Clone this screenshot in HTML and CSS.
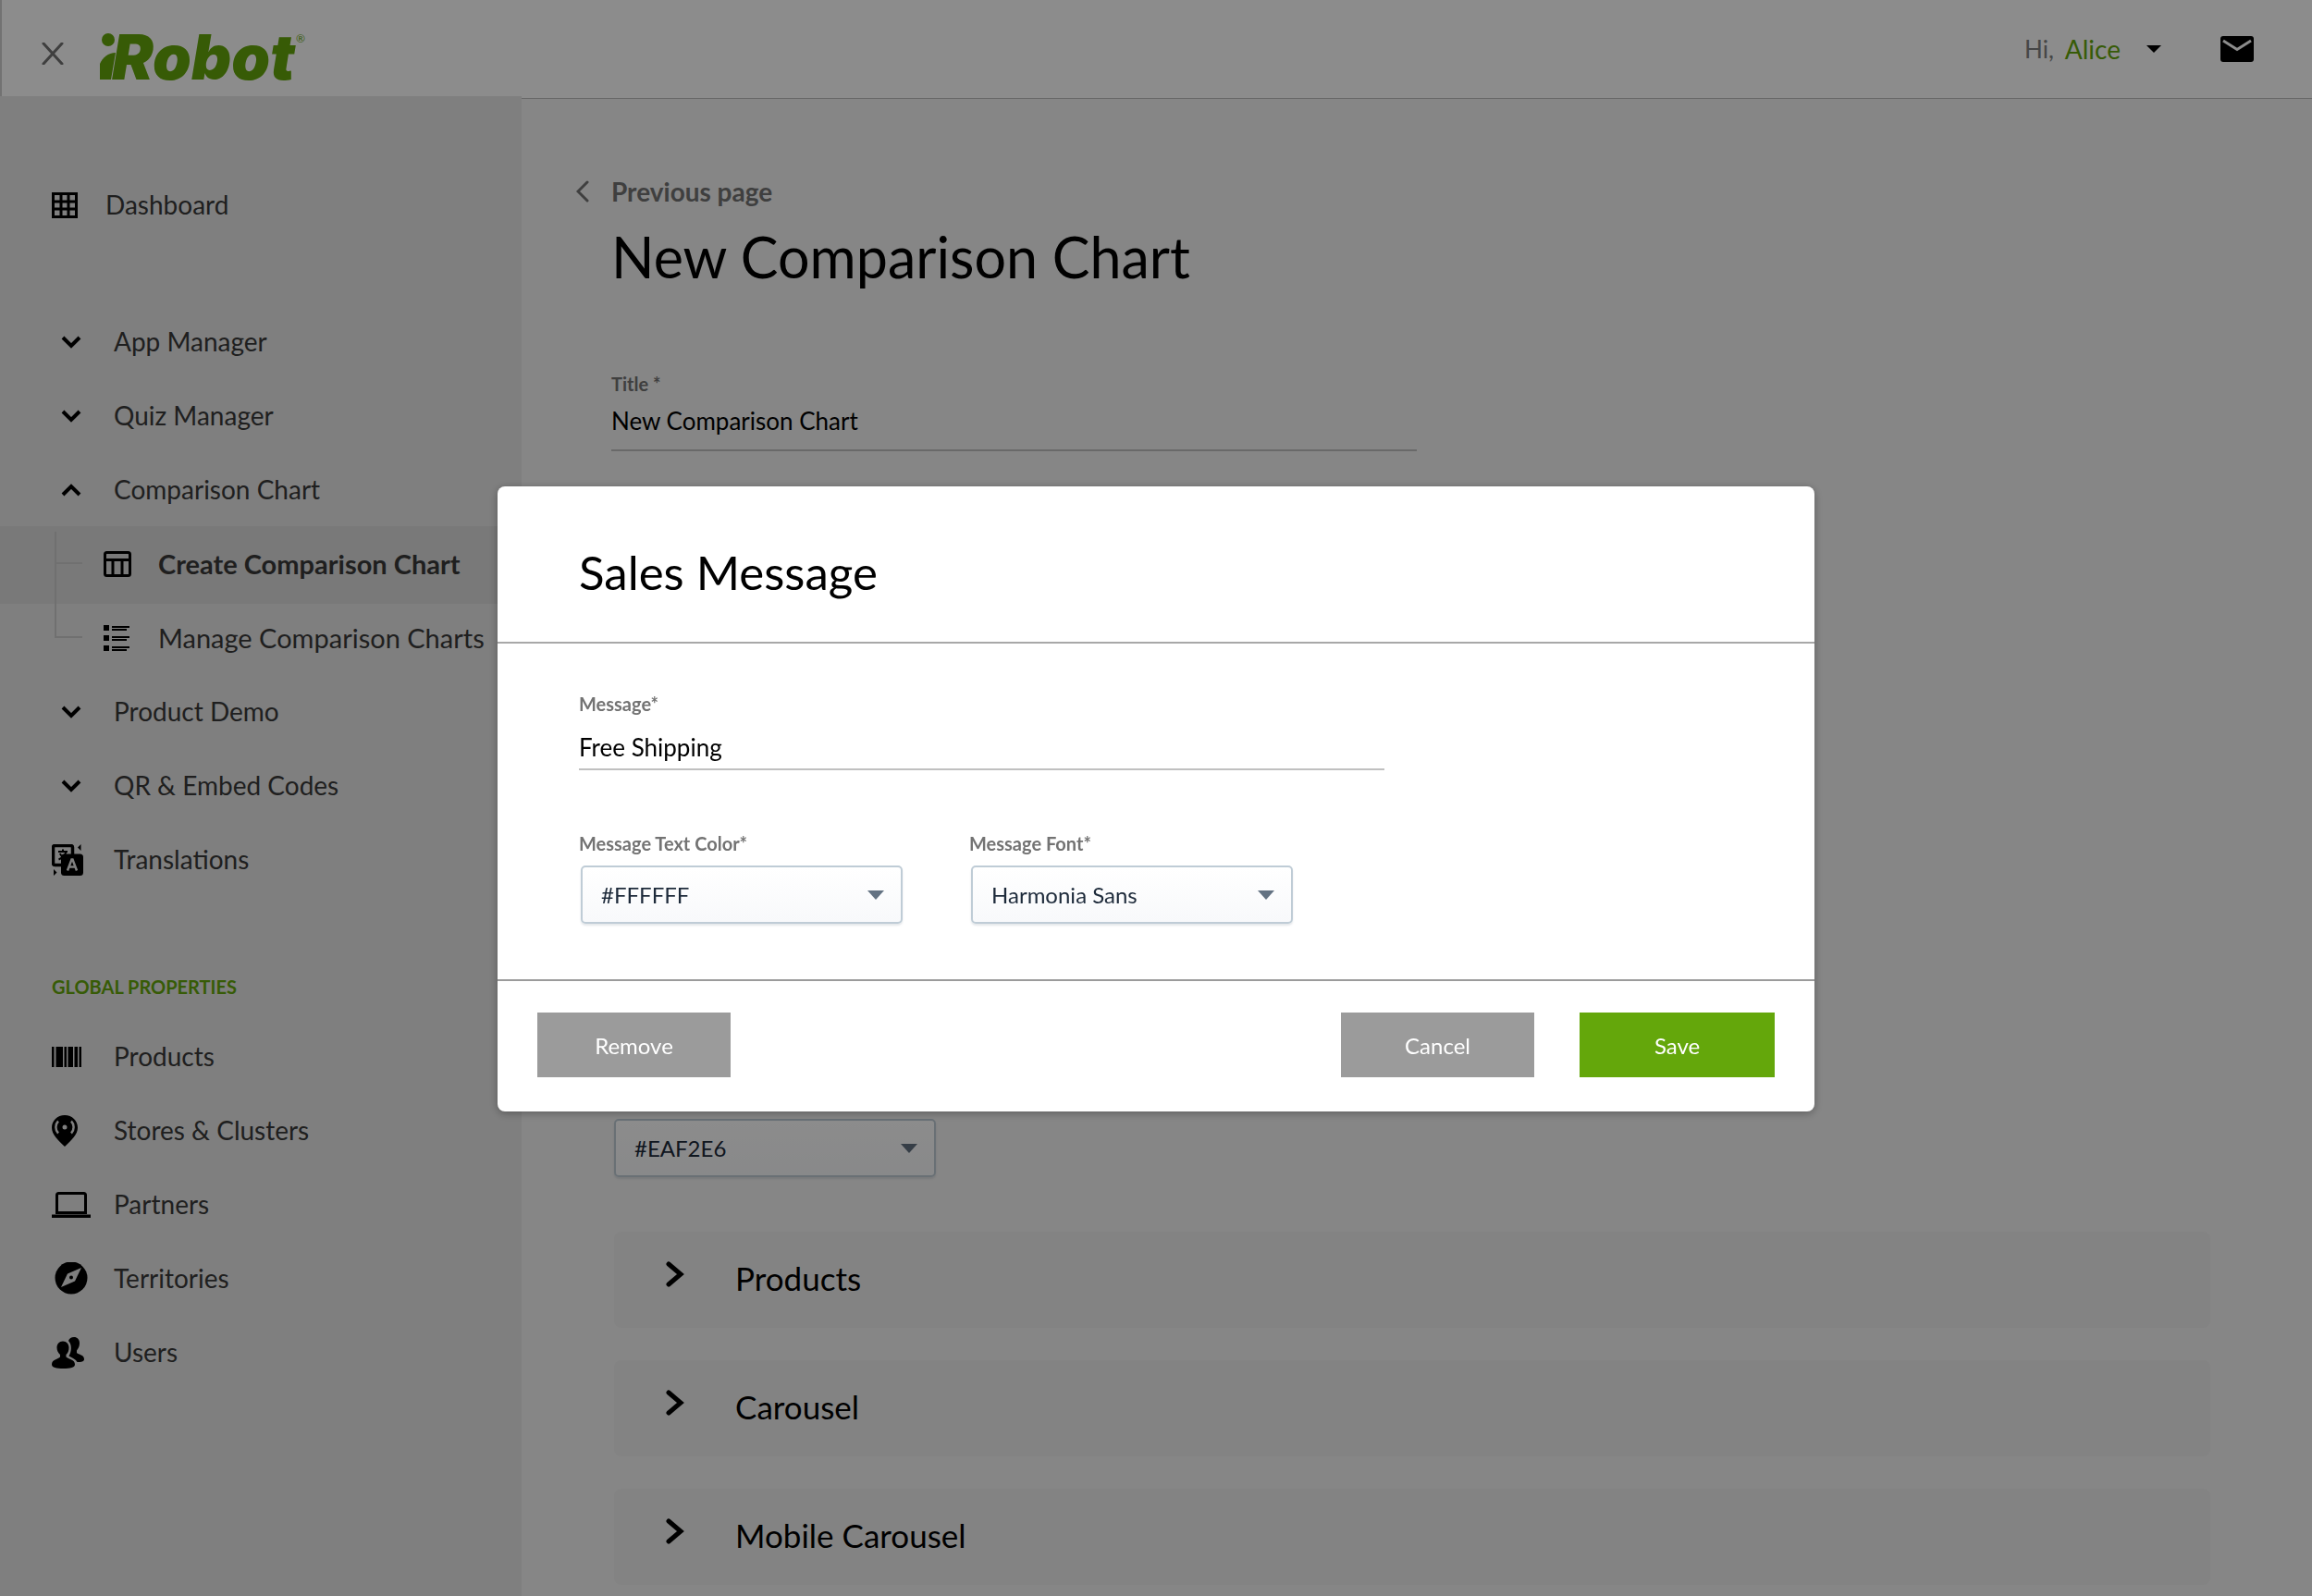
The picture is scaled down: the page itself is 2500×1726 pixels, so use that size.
FILE: index.html
```html
<!DOCTYPE html>
<html lang="en">
<head>
<meta charset="utf-8">
<meta name="viewport" content="width=device-width, initial-scale=1">
<title>New Comparison Chart</title>
<link rel="stylesheet" href="styles.css">
</head>
<body>
<header class="topbar">
  <button class="icon-button" type="button" aria-label="Close menu">
    <svg width="24" height="24" viewBox="0 0 24 24" fill="none" stroke="#737373" stroke-width="3" stroke-linecap="round"><path d="M2 1L22 23M22 1L2 23"/></svg>
  </button>
  <a class="logo" href="#" aria-label="iRobot">
    <svg width="222" height="54" viewBox="0 0 222 54" fill="#64a70b">
      <circle cx="9" cy="8" r="7"/>
      <path d="M0 51V34C3 27 9 22 17 22L12 51Z"/>
      <text class="logo-word" x="13" y="51">Robot</text>
      <text class="logo-mark" x="212" y="11">®</text>
    </svg>
  </a>
  <div class="account">
    <span class="greeting">Hi,</span>
    <button class="account-menu" type="button">Alice
      <svg width="16" height="8" viewBox="0 0 16 8"><path d="M0 0H16L8 8Z"/></svg>
    </button>
    <button class="icon-button" type="button" aria-label="Messages">
      <svg width="36" height="28" viewBox="0 0 36 28"><rect width="36" height="28" rx="3"/><path d="M3 5L18 14.500L33 5" fill="none" stroke="#fff" stroke-width="3"/></svg>
    </button>
  </div>
</header>

<div class="layout">
  <nav class="sidebar" aria-label="Main">
    <a class="nav-item nav-home" href="#">
      <span class="nav-icon"><svg width="28" height="28" viewBox="0 0 28 28" fill="none" stroke="#000" stroke-width="3"><path d="M1.500 1.500H26.500V26.500H1.500ZM10 1V27M18 1V27M1 10H27M1 18H27"/></svg></span>Dashboard</a>
    <button class="nav-item" type="button"><span class="nav-icon nav-chevron"><svg width="22" height="14" viewBox="0 0 22 14"><path class="chev" d="M2 2L11 11L20 2"/></svg></span>App Manager</button>
    <button class="nav-item" type="button"><span class="nav-icon nav-chevron"><svg width="22" height="14" viewBox="0 0 22 14"><path class="chev" d="M2 2L11 11L20 2"/></svg></span>Quiz Manager</button>
    <button class="nav-item" type="button" aria-expanded="true"><span class="nav-icon nav-chevron"><svg width="22" height="14" viewBox="0 0 22 14"><path class="chev" d="M2 12L11 3L20 12"/></svg></span>Comparison Chart</button>
    <div class="subnav">
      <svg class="tree" width="30" height="116" viewBox="0 0 30 116" fill="none" stroke="#cdcdcd" stroke-width="2"><path d="M1 0V114H30M1 34H30"/></svg>
      <a class="nav-item nav-sub active" href="#" aria-current="page">
        <span class="nav-icon"><svg width="30" height="28" viewBox="0 0 30 28" fill="none" stroke="#000" stroke-width="3"><rect x="1.500" y="1.500" width="27" height="25" rx="2"/><path d="M1 9.500H29M10 9V27M20 9V27"/></svg></span>Create Comparison Chart</a>
      <a class="nav-item nav-sub" href="#">
        <span class="nav-icon"><svg width="30" height="28" viewBox="0 0 30 28"><path d="M0 0H6V6H0ZM0 11H6V17H0ZM0 22H6V28H0ZM9 1H28V3H9ZM9 4H25V6H9ZM9 12H28V14H9ZM9 15H25V17H9ZM9 23H28V25H9ZM9 26H25V28H9Z"/></svg></span>Manage Comparison Charts</a>
    </div>
    <button class="nav-item" type="button"><span class="nav-icon nav-chevron"><svg width="22" height="14" viewBox="0 0 22 14"><path class="chev" d="M2 2L11 11L20 2"/></svg></span>Product Demo</button>
    <button class="nav-item" type="button"><span class="nav-icon nav-chevron"><svg width="22" height="14" viewBox="0 0 22 14"><path class="chev" d="M2 2L11 11L20 2"/></svg></span>QR &amp; Embed Codes</button>
    <a class="nav-item" href="#">
      <span class="nav-icon"><svg width="34" height="34" viewBox="0 0 34 34">
        <rect x="1.500" y="1.500" width="21" height="21" rx="2" fill="none" stroke="#000" stroke-width="3.500"/>
        <path d="M7 8H17M12 5.500V8M15.500 8C14.500 12 11 15 7.500 16.500M9 10C10 13 12.500 15 15 16" fill="none" stroke="#000" stroke-width="2"/>
        <rect x="10" y="10.500" width="24" height="23.500" rx="3.500"/>
        <path d="M17 28.500L21.500 16.500H22.500L27 28.500M19 24.500H25" fill="none" stroke="#e7e7e7" stroke-width="2.500"/>
        <path d="M31.500 0V7L28 3.500ZM2 27V34L5.500 30.500Z"/></svg></span>Translations</a>

    <h2 class="nav-heading">Global Properties</h2>
    <a class="nav-item" href="#">
      <span class="nav-icon"><svg width="32" height="22" viewBox="0 0 32 22"><path d="M0 0H2.500V22H0ZM4.500 0H12V22H4.500ZM13.500 0H16V22H13.500ZM17.500 0H23V22H17.500ZM24.500 0H28V22H24.500ZM29.500 0H32V22H29.500Z"/></svg></span>Products</a>
    <a class="nav-item" href="#">
      <span class="nav-icon"><svg width="28" height="34" viewBox="0 0 28 34"><path d="M14 0C6 0 0 6 0 13.500C0 21 7 27 14 34C21 27 28 21 28 13.500C28 6 22 0 14 0Z"/><circle cx="14" cy="13" r="2.500" fill="#e7e7e7"/><path d="M7 6.500C3.500 10 3.500 16 7 19.500M21 6.500C24.500 10 24.500 16 21 19.500" fill="none" stroke="#e7e7e7" stroke-width="2.500"/></svg></span>Stores &amp; Clusters</a>
    <a class="nav-item" href="#">
      <span class="nav-icon"><svg width="42" height="28" viewBox="0 0 42 28"><rect x="5.500" y="1.500" width="31" height="21" rx="2" fill="none" stroke="#000" stroke-width="3"/><path d="M0 24.500H42V28H0ZM4 21H38V24H4Z"/></svg></span>Partners</a>
    <a class="nav-item" href="#">
      <span class="nav-icon"><svg width="40" height="36" viewBox="0 0 40 36"><circle cx="21" cy="17" r="17.500"/><path d="M32 6L25 20.500L10 27L17 12.500Z" fill="#e7e7e7"/><circle cx="21" cy="16.500" r="2"/></svg></span>Territories</a>
    <a class="nav-item" href="#">
      <span class="nav-icon"><svg width="35" height="34" viewBox="0 0 35 34"><path d="M12 4.500C16 4.500 18.500 7.500 18.500 11.500C18.500 14.500 17.500 17 15.500 19V21.500C18 24 25 24 25 29.500C25 33 20 34 12.500 34C5 34 0 33 0 29.500C0 24 7 24 9 21.500V19C7 17 5.500 14.500 5.500 11.500C5.500 7.500 8 4.500 12 4.500Z"/><path d="M18 4C19 1.500 21 0 24 0C27.500 0 30 2.500 30 6.500C30 9.500 29 12 27 14.500V17C29 19 35 19 35 24C35 26.500 32 27 27.500 27C26 24 22.500 22.500 18.500 20.500C21.500 15.500 22 8 18 4Z"/></svg></span>Users</a>
  </nav>

  <main class="content">
    <a class="back" href="#">
      <svg width="14" height="24" viewBox="0 0 14 24" fill="none" stroke="#737373" stroke-width="3" stroke-linecap="round"><path d="M12 2L2 12L12 22"/></svg>Previous page</a>
    <h1>New Comparison Chart</h1>
    <div class="field">
      <label for="title">Title *</label>
      <input id="title" type="text" value="New Comparison Chart">
    </div>
    <div class="select background-color">
      <select aria-label="Background color"><option>#EAF2E6</option></select>
      <svg width="18" height="10" viewBox="0 0 18 10"><path d="M0 0H18L9 10Z"/></svg>
    </div>
    <div class="sections">
      <button class="section" type="button"><svg width="20" height="28" viewBox="0 0 20 28"><path d="M3 3L16 14L3 25"/></svg>Products</button>
      <button class="section" type="button"><svg width="20" height="28" viewBox="0 0 20 28"><path d="M3 3L16 14L3 25"/></svg>Carousel</button>
      <button class="section" type="button"><svg width="20" height="28" viewBox="0 0 20 28"><path d="M3 3L16 14L3 25"/></svg>Mobile Carousel</button>
    </div>
  </main>
</div>

<div class="overlay">
  <form class="modal" role="dialog" aria-modal="true" aria-labelledby="modal-title">
    <h2 class="modal-title" id="modal-title">Sales Message</h2>
    <div class="modal-body">
      <div class="field">
        <label for="message">Message*</label>
        <input id="message" type="text" value="Free Shipping">
      </div>
      <div class="field-row">
        <div class="field">
          <label for="color">Message Text Color*</label>
          <div class="select">
            <select id="color"><option>#FFFFFF</option></select>
            <svg width="18" height="10" viewBox="0 0 18 10"><path d="M0 0H18L9 10Z"/></svg>
          </div>
        </div>
        <div class="field">
          <label for="font">Message Font*</label>
          <div class="select">
            <select id="font"><option>Harmonia Sans</option></select>
            <svg width="18" height="10" viewBox="0 0 18 10"><path d="M0 0H18L9 10Z"/></svg>
          </div>
        </div>
      </div>
    </div>
    <div class="modal-actions">
      <button class="button" type="button">Remove</button>
      <button class="button push" type="button">Cancel</button>
      <button class="button primary" type="submit">Save</button>
    </div>
  </form>
</div>
</body>
</html>
```

FILE: styles.css
```css
* {
  box-sizing: border-box;
}

body {
  margin: 0;
  background: #f4f4f4;
  color: #000;
  font-family: Lato, "Open Sans", sans-serif;
  font-size: 24px;
}

button,
input,
select {
  font: inherit;
  color: inherit;
}

button {
  padding: 0;
  border: 0;
  background: none;
  text-align: left;
}

a {
  color: inherit;
  text-decoration: none;
}

h1,
h2 {
  margin: 0;
  font-weight: 400;
}

svg {
  display: block;
  flex: none;
}

/* Top bar */

.topbar {
  display: flex;
  align-items: center;
  height: 107px;
  padding: 0 63px 0 43px;
  border-bottom: 1px solid #bdbdbd;
  border-left: 2px solid #d0d0d0;
  background: #fff;
}

.topbar > .icon-button {
  margin-top: 10px;
}

.logo {
  margin: 18px 0 0 39px;
}

.logo svg {
  overflow: visible;
}

.logo-word {
  font-family: Inter, sans-serif;
  font-size: 67px;
  font-weight: 900;
  font-style: italic;
}

.logo-mark {
  font-size: 12px;
}

.account {
  display: flex;
  align-items: center;
  margin-left: auto;
  font-size: 28px;
}

.greeting {
  margin-right: 12px;
  color: #808080;
  font-size: 26px;
}

.account-menu {
  display: flex;
  align-items: center;
  gap: 28px;
  margin-right: 64px;
  color: #64a70b;
}

/* Sidebar */

.layout {
  display: flex;
  min-height: calc(100vh - 107px);
}

.sidebar {
  flex: none;
  width: 564px;
  margin-top: -3px;
  padding-top: 77px;
  background: #e7e7e7;
}

.nav-item {
  display: grid;
  grid-template-columns: 67px 1fr;
  align-items: center;
  width: 100%;
  height: 80px;
  padding-left: 56px;
  color: #3a3a3a;
  font-size: 28px;
  white-space: nowrap;
}

.nav-icon {
  padding-top: 2px;
}

.nav-chevron {
  padding-left: 10px;
}

.chev {
  fill: none;
  stroke: #000;
  stroke-width: 4px;
}

.nav-home {
  grid-template-columns: 58px 1fr;
  margin-bottom: 68px;
}

.subnav {
  position: relative;
}

.tree {
  position: absolute;
  top: 6px;
  left: 59px;
}

.nav-sub {
  padding-left: 112px;
  grid-template-columns: 59px 1fr;
  font-size: 29px;
}

.active {
  background: #dcdcdc;
  box-shadow: 0 4px 0 #dcdcdc;
  font-weight: 700;
}

.nav-heading {
  margin: 85px 0 22px 56px;
  color: #64a70b;
  font-size: 20px;
  font-weight: 700;
  line-height: 26px;
  text-transform: uppercase;
}

/* Page content */

.content {
  flex: 1;
  padding: 84px 110px 12px 97px;
}

.back {
  display: flex;
  align-items: center;
  gap: 24px;
  margin-left: -38px;
  color: #737373;
  font-size: 28px;
  font-weight: 700;
  line-height: 32px;
}

h1 {
  margin: 19px 0 90px;
  font-size: 61px;
  line-height: 72px;
}

.field label {
  display: block;
  color: #737373;
  font-size: 20px;
  font-weight: 700;
  line-height: 22px;
}

.field input {
  display: block;
  width: 100%;
  max-width: 871px;
  margin-top: 14px;
  padding: 0 0 16px;
  border: 0;
  border-bottom: 2px solid #c0c0c0;
  background: none;
  font-size: 26px;
  line-height: 30px;
}

.select {
  display: grid;
  align-items: center;
  width: 350px;
  padding-left: 2px;
}

.select select {
  grid-area: 1 / 1;
  height: 63px;
  padding: 0 20px;
  border: 2px solid #bfccd6;
  border-radius: 5px;
  background: linear-gradient(#fff, #f8f9fb);
  box-shadow: 0 2px 2px rgba(80, 100, 120, 0.15);
  color: #1d2a3a;
  appearance: none;
}

.select svg {
  grid-area: 1 / 1;
  justify-self: end;
  margin-right: 20px;
  fill: #637282;
  pointer-events: none;
}

.background-color {
  width: 351px;
  margin: 722px 0 59px;
  padding-left: 3px;
}

.sections {
  display: grid;
  gap: 35px;
}

.section {
  display: flex;
  align-items: center;
  gap: 55px;
  height: 104px;
  margin-left: 3px;
  padding: 0 0 5px 56px;
  border-radius: 8px;
  background: #eee;
  font-size: 35px;
}

.section svg {
  margin-bottom: 8px;
  fill: none;
  stroke: #000;
  stroke-width: 5px;
  stroke-linecap: round;
}

/* Dialog */

.overlay {
  position: fixed;
  inset: 0;
  display: flex;
  align-items: center;
  justify-content: center;
  background: rgba(0, 0, 0, 0.45);
}

.modal {
  width: 1424px;
  max-width: 90%;
  margin-top: 2px;
  border-radius: 8px;
  background: #fff;
  box-shadow: 0 2px 10px rgba(0, 0, 0, 0.3);
}

.modal-title {
  padding: 63px 88px 45px;
  border-bottom: 2px solid #a8a8a8;
  font-size: 51px;
  line-height: 60px;
}

.modal-body {
  padding: 54px 88px 60px;
}

.modal-body input {
  margin-top: 21px;
  padding-bottom: 8px;
}

.field-row {
  display: flex;
  gap: 72px;
  margin-top: 68px;
}

.field-row .select {
  margin-top: 13px;
}

.modal-actions {
  display: flex;
  padding: 34px 43px 37px;
  border-top: 2px solid #9b9b9b;
}

.button {
  width: 209px;
  height: 70px;
  background: #9b9b9b;
  color: #fff;
  text-align: center;
}

.push {
  margin-left: auto;
}

.primary {
  width: 211px;
  margin-left: 49px;
  background: #64a70b;
}
```
